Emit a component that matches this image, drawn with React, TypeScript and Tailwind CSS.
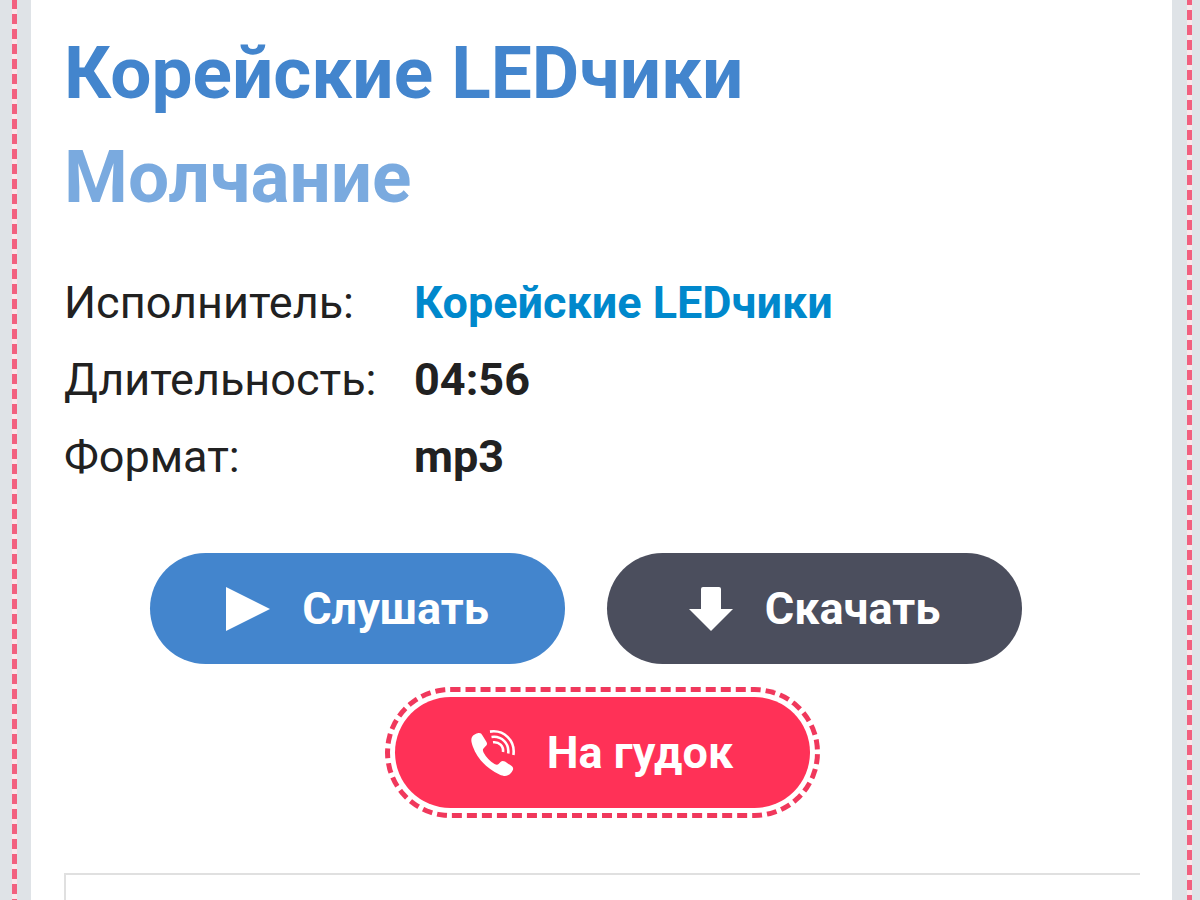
import type { ReactNode } from "react";

function PlayIcon() {
  return (
    <svg viewBox="0 0 44 44" className="h-11 w-11 shrink-0" fill="currentColor" aria-hidden="true">
      <path d="M0 0 L44 22 L0 44 Z" />
    </svg>
  );
}

function DownloadIcon() {
  return (
    <svg viewBox="0 0 44 44" className="h-11 w-11 shrink-0" fill="currentColor" aria-hidden="true">
      <path d="M14 0 H30 Q32 0 32 2 V22 H44 L22 44 L0 22 H12 V2 Q12 0 14 0 Z" />
    </svg>
  );
}

function PhoneIcon() {
  return (
    <svg viewBox="0 0 44 46" className="h-[46px] w-11 shrink-0" aria-hidden="true">
      <path
        fill="currentColor"
        d="M1 7 C2 5 5 3.4 7.5 3 C9.5 2.8 10.5 3.6 11.5 5.5 L15.5 12 C16.5 14 16 15.4 14.3 16.6 L12.5 18.4 C11.5 19.6 11.8 21 12.7 22.8 C15 27 19 31.3 23.5 34 C25.3 35 26.6 35 27.6 34 L29.5 32 C30.8 30.7 32.3 30.6 34 31.6 L40 35.6 C42.3 37.2 42.6 38.6 41.6 40.6 C40.4 43 38.4 45.2 35.6 45.8 C33.5 46.200 31 45.6 28.4 44.4 C16.5 38.8 6.5 29.5 1.8 16.5 C.6 13 -.4 9.8 1 7 Z"
      />
      <g fill="none" stroke="currentColor" strokeWidth="2.6">
        <path d="M19 1.6 C33 -.5 44.5 10.5 42.4 25" />
        <path d="M20.5 7 C30.5 5.5 38.5 13.5 37.2 23.5" />
        <path d="M22 12.3 C28 11.5 32.8 16 32 22" />
      </g>
    </svg>
  );
}

const pill =
  "flex h-[111px] w-[415px] items-center justify-center gap-8 rounded-full text-[45px] leading-none font-bold text-white";

function Row({ label, children }: { label: string; children: ReactNode }) {
  return (
    <div className="flex">
      <dt className="w-[350px] shrink-0">{label}</dt>
      <dd className="font-bold">{children}</dd>
    </div>
  );
}

export default function App() {
  return (
    <div className="flex h-screen overflow-hidden bg-[#dfe3e7] font-['Roboto','Liberation_Sans',sans-serif] text-[#212121]">
      <div className="flex w-[31px] shrink-0 justify-center pr-[2px]">
        <div className="w-[5px] bg-[repeating-linear-gradient(to_bottom,#f2607f_0_10px,#f9e6ea_10px_15px)] bg-[position:0_-1px]" />
      </div>
      <main className="min-w-0 flex-1 bg-white pt-[21px] pr-8 pl-[33px]">
        <h1 className="text-[73px] leading-[104px] font-bold text-[#4385cd]">
          Корейские LEDчики
          <span className="block text-[#7aaadf]">Молчание</span>
        </h1>
        <dl className="mt-[35px] text-[45px] leading-[77px]">
          <Row label="Исполнитель:">
            <a href="#artist" className="text-[#0088cc]">
              Корейские LEDчики
            </a>
          </Row>
          <Row label="Длительность:">04:56</Row>
          <Row label="Формат:">mp3</Row>
        </dl>
        <div className="mt-[58px] flex flex-wrap justify-center gap-x-[42px] pr-8">
          <button type="button" className={`${pill} bg-[#4385cd]`}>
            <PlayIcon />
            Слушать
          </button>
          <button type="button" className={`${pill} bg-[#4b4e5d]`}>
            <DownloadIcon />
            Скачать
          </button>
        </div>
        <div className="mt-[23px] flex justify-center">
          <div className="rounded-full border-[5px] border-dashed border-[#f0385c] p-[5px]">
            <button type="button" className={`${pill} bg-[#ff3157]`}>
              <PhoneIcon />
              На гудок
            </button>
          </div>
        </div>
        <div className="mt-[55px] h-24 border-t-2 border-l-2 border-[#e0e0e0]" />
      </main>
      <div className="flex w-7 shrink-0 justify-center pl-[7px]">
        <div className="w-[5px] bg-[repeating-linear-gradient(to_bottom,#f2607f_0_5px,#f9e6ea_5px_10px,#f2607f_10px_15px)]" />
      </div>
    </div>
  );
}
